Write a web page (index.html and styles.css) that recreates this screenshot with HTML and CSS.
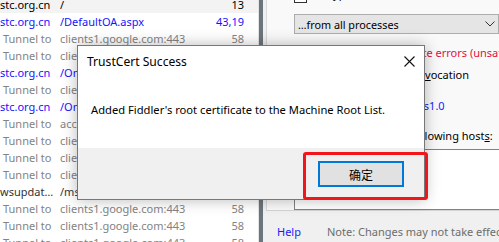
FILE: index.html
```html
<!DOCTYPE html>
<html lang="en">
<head>
  <meta charset="UTF-8" />
  <title>Fiddler - TrustCert Success</title>
  <link rel="stylesheet" href="styles.css">
</head>
<body>
  <div class="app">
    <div class="sessions">
      <div class="row sel"><span class="host">stc.org.cn</span><span class="url">/</span><span class="size">13</span></div>
      <div class="row blue"><span class="host">stc.org.cn</span><span class="url">/DefaultOA.aspx</span><span class="size">43,19</span></div>
      <div class="row gray"><span class="host tun">Tunnel to</span><span class="url">clients1.google.com:443</span><span class="size">58</span></div>
      <div class="row gray"><span class="host tun">Tunnel to</span><span class="url">clients1.google.com:443</span><span class="size">58</span></div>
      <div class="row blue"><span class="host">stc.org.cn</span><span class="url">/OnlineUsers.aspx</span><span class="size">1,204</span></div>
      <div class="row gray"><span class="host tun">Tunnel to</span><span class="url">clients1.google.com:443</span><span class="size">58</span></div>
      <div class="row blue"><span class="host">stc.org.cn</span><span class="url">/OnlineUsers.aspx</span><span class="size">1,204</span></div>
      <div class="row gray"><span class="host tun">Tunnel to</span><span class="url">accounts.google.com:443</span><span class="size">58</span></div>
      <div class="row gray"><span class="host tun">Tunnel to</span><span class="url">clients1.google.com:443</span><span class="size">58</span></div>
      <div class="row gray"><span class="host tun">Tunnel to</span><span class="url">clients1.google.com:443</span><span class="size">58</span></div>
      <div class="row gray"><span class="host tun">Tunnel to</span><span class="url">clients1.google.com:443</span><span class="size">58</span></div>
      <div class="row dark"><span class="host">wsupdat…</span><span class="url">/msdownload/update</span><span class="size">0</span></div>
      <div class="row gray"><span class="host tun">Tunnel to</span><span class="url">clients1.google.com:443</span><span class="size">58</span></div>
      <div class="row gray"><span class="host tun">Tunnel to</span><span class="url">clients1.google.com:443</span><span class="size">58</span></div>
      <div class="row gray"><span class="host tun">Tunnel to</span><span class="url">clients1.google.com:443</span><span class="size">58</span></div>
    </div>
    <div class="splitter"></div>
    <div class="options">
      <div class="page">
        <div class="opt first"><span class="chk"></span><span class="txt">D<u>e</u>crypt HTTPS traffic</span></div>
        <div class="combo"><span>…from all processes</span>
          <svg width="10" height="6" viewBox="0 0 10 6"><path d="M0.5 0.5 L5 5 L9.5 0.5" fill="none" stroke="#333" stroke-width="1"/></svg>
        </div>
        <div class="opt warn"><span class="chk"></span><span>Ignore server certificate errors (unsafe)</span></div>
        <div class="opt"><span class="chk"></span><span>Check for certificate re<u>v</u>ocation</span></div>
        <div class="opt link"><span>Protocols: &lt;client&gt;; ssl3;tls1.0</span></div>
        <div class="opt label"><span>Skip decryption for the following host<u>s</u>:</span></div>
        <div class="hosts"></div>
      </div>
      <div class="footer">
        <span class="help">Help</span>
        <span class="note">Note: Changes may not take effect until Fiddler is restarted.</span>
      </div>
    </div>
  </div>

  <div class="dialog">
    <div class="dlg-title">
      <span>TrustCert Success</span>
      <svg class="close" width="11" height="11" viewBox="0 0 11 11"><path d="M0.5 0.5 L10.5 10.5 M10.5 0.5 L0.5 10.5" stroke="#111" stroke-width="1.1"/></svg>
    </div>
    <div class="dlg-body">Added Fiddler's root certificate to the Machine Root List.</div>
    <div class="dlg-foot">
      <button class="ok">确定</button>
    </div>
  </div>
  <div class="mark"></div>
</body>
</html>
```

FILE: styles.css
```css
body {
  margin: 0;
  width: 499px;
  height: 242px;
  overflow: hidden;
  font-family: "Noto Sans", "Noto Sans CJK SC", sans-serif;
  font-size: 12px;
  background: #f0f0f0;
}
.app {
  display: flex;
  height: 242px;
}
.sessions {
  flex: none;
  width: 258px;
  background: #fff;
  margin-top: -4px;
  overflow: hidden;
  border-right: 1px solid #e3e3e3;
  font-size: 11px;
}
.row {
  display: grid;
  grid-template-columns: 60px 1fr 50px;
  height: 17px;
  line-height: 17px;
  padding-right: 14px;
  white-space: nowrap;
}
.row span {
  overflow: hidden;
  min-width: 0;
}
.row .tun {
  padding-left: 3px;
}
.row .size {
  text-align: right;
}
.sel {
  background: #f3f3f3;
  color: #000;
}
.blue { color: #1414ff; }
.gray { color: #838383; }
.dark { color: #333; }
.splitter {
  flex: none;
  width: 4px;
  background: #6c747c;
}
.options {
  flex: 1;
  min-width: 0;
  overflow: hidden;
  display: flex;
  flex-direction: column;
  padding-left: 3px;
  font-size: 11px;
}
.page {
  background: #f9f9f9;
  border-left: 1px solid #dadada;
  border-bottom: 1px solid #d4d4d4;
  padding-left: 27px;
  height: 211px;
  box-sizing: border-box;
  display: flex;
  flex-direction: column;
  overflow: hidden;
}
.opt {
  display: flex;
  align-items: center;
  flex: none;
  height: 20px;
  white-space: nowrap;
  color: #000;
}
.opt .chk {
  width: 11px;
  height: 11px;
  border: 1px solid #333;
  background: #fff;
  margin-right: 2px;
  flex: none;
}
.first {
  margin-top: -14px;
}
.first .txt {
  margin-bottom: 6px;
}
.combo {
  flex: none;
  margin-top: 8px;
  height: 20px;
  box-sizing: border-box;
  border: 1px solid #adadad;
  background: #e5e5e5;
  display: flex;
  align-items: center;
  justify-content: space-between;
  padding: 0 3px 0 3px;
  white-space: nowrap;
  font-size: 10.8px;
}
.combo svg {
  flex: none;
}
.warn {
  margin-top: 8px;
  color: #e2103c;
}
.warn + .opt {
  margin-top: 2px;
}
.link {
  margin-top: 11px;
  color: #1a1aff;
}
.label {
  margin-top: 10px;
}
.label span {
  margin-left: -3px;
}
.hosts {
  flex: none;
  margin-top: 4px;
  height: 59px;
  background: #fff;
  border: 1px solid #828282;
  border-right: none;
}
.footer {
  display: flex;
  align-items: center;
  gap: 26px;
  padding: 13px 0 0 11px;
  white-space: nowrap;
  font-size: 11px;
}
.help {
  color: #1a1aff;
}
.note {
  color: #6d6d6d;
}
.dialog {
  position: absolute;
  left: 77px;
  top: 45px;
  width: 348px;
  height: 155px;
  box-sizing: border-box;
  border: 1px solid #777;
  background: #fff;
  box-shadow: 0 0 14px rgba(0, 0, 0, 0.28);
  display: flex;
  flex-direction: column;
}
.dlg-title {
  height: 30px;
  display: flex;
  align-items: center;
  justify-content: space-between;
  padding: 0 9px 0 9px;
  font-size: 12.1px;
  color: #000;
}
.dlg-body {
  height: 72px;
  padding-left: 13px;
  padding-top: 26px;
  box-sizing: border-box;
  font-size: 11.2px;
  color: #000;
}
.dlg-foot {
  flex: 1;
  background: #f0f0f0;
  display: flex;
  align-items: center;
  justify-content: flex-end;
  padding-right: 20px;
}
.ok {
  width: 86px;
  height: 26px;
  margin-top: 1px;
  border: 2px solid #0078d7;
  background: #e1e1e1;
  font-family: "Noto Sans CJK SC", sans-serif;
  font-size: 12px;
  color: #000;
  padding: 0;
}
.mark {
  position: absolute;
  left: 303px;
  top: 152px;
  width: 125px;
  height: 48px;
  box-sizing: border-box;
  border: 3px solid #f2161b;
  border-radius: 3px;
}
```
